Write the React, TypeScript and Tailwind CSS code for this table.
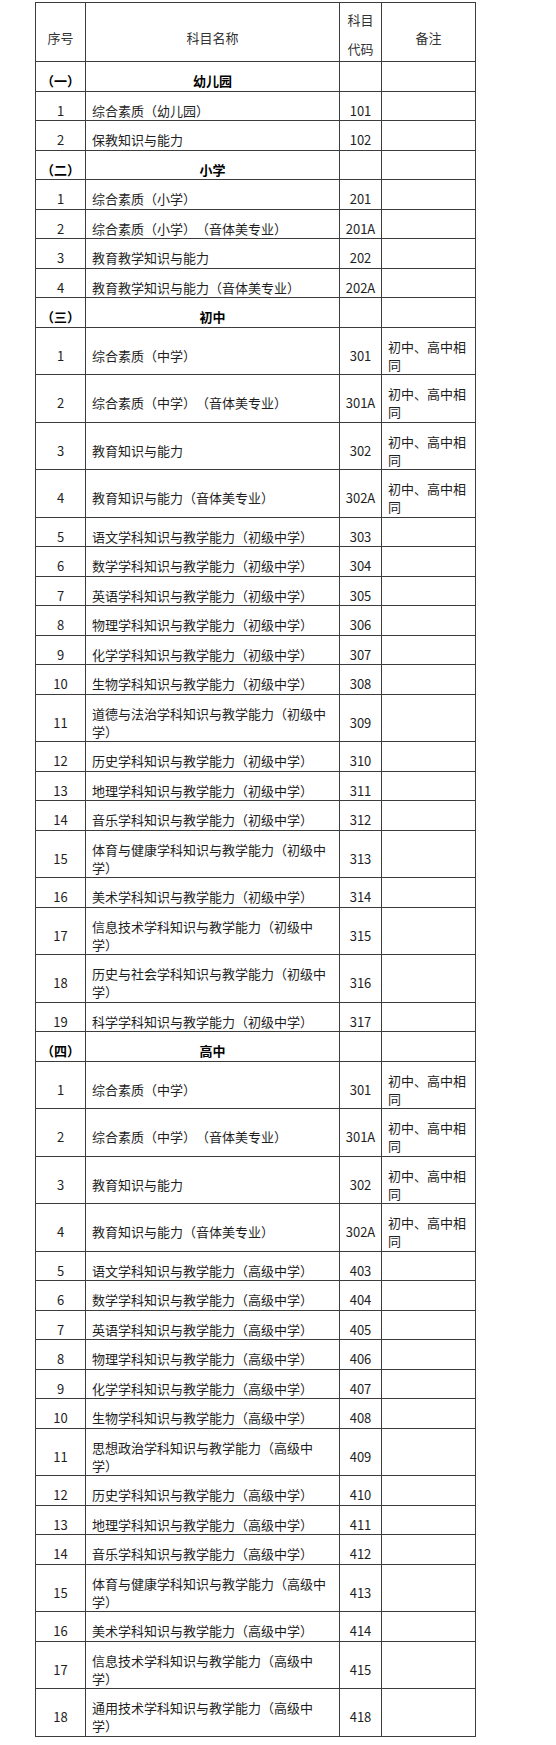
const SAME = '初中、高中相同';

type Row = [string, string, string, string?];

const sections: { label: string; title: string; rows: Row[] }[] = [
  {
    label: '（一）',
    title: '幼儿园',
    rows: [
      ['1', '综合素质（幼儿园）', '101'],
      ['2', '保教知识与能力', '102'],
    ],
  },
  {
    label: '（二）',
    title: '小学',
    rows: [
      ['1', '综合素质（小学）', '201'],
      ['2', '综合素质（小学）（音体美专业）', '201A'],
      ['3', '教育教学知识与能力', '202'],
      ['4', '教育教学知识与能力（音体美专业）', '202A'],
    ],
  },
  {
    label: '（三）',
    title: '初中',
    rows: [
      ['1', '综合素质（中学）', '301', SAME],
      ['2', '综合素质（中学）（音体美专业）', '301A', SAME],
      ['3', '教育知识与能力', '302', SAME],
      ['4', '教育知识与能力（音体美专业）', '302A', SAME],
      ['5', '语文学科知识与教学能力（初级中学）', '303'],
      ['6', '数学学科知识与教学能力（初级中学）', '304'],
      ['7', '英语学科知识与教学能力（初级中学）', '305'],
      ['8', '物理学科知识与教学能力（初级中学）', '306'],
      ['9', '化学学科知识与教学能力（初级中学）', '307'],
      ['10', '生物学科知识与教学能力（初级中学）', '308'],
      ['11', '道德与法治学科知识与教学能力（初级中学）', '309'],
      ['12', '历史学科知识与教学能力（初级中学）', '310'],
      ['13', '地理学科知识与教学能力（初级中学）', '311'],
      ['14', '音乐学科知识与教学能力（初级中学）', '312'],
      ['15', '体育与健康学科知识与教学能力（初级中学）', '313'],
      ['16', '美术学科知识与教学能力（初级中学）', '314'],
      ['17', '信息技术学科知识与教学能力（初级中学）', '315'],
      ['18', '历史与社会学科知识与教学能力（初级中学）', '316'],
      ['19', '科学学科知识与教学能力（初级中学）', '317'],
    ],
  },
  {
    label: '（四）',
    title: '高中',
    rows: [
      ['1', '综合素质（中学）', '301', SAME],
      ['2', '综合素质（中学）（音体美专业）', '301A', SAME],
      ['3', '教育知识与能力', '302', SAME],
      ['4', '教育知识与能力（音体美专业）', '302A', SAME],
      ['5', '语文学科知识与教学能力（高级中学）', '403'],
      ['6', '数学学科知识与教学能力（高级中学）', '404'],
      ['7', '英语学科知识与教学能力（高级中学）', '405'],
      ['8', '物理学科知识与教学能力（高级中学）', '406'],
      ['9', '化学学科知识与教学能力（高级中学）', '407'],
      ['10', '生物学科知识与教学能力（高级中学）', '408'],
      ['11', '思想政治学科知识与教学能力（高级中学）', '409'],
      ['12', '历史学科知识与教学能力（高级中学）', '410'],
      ['13', '地理学科知识与教学能力（高级中学）', '411'],
      ['14', '音乐学科知识与教学能力（高级中学）', '412'],
      ['15', '体育与健康学科知识与教学能力（高级中学）', '413'],
      ['16', '美术学科知识与教学能力（高级中学）', '414'],
      ['17', '信息技术学科知识与教学能力（高级中学）', '415'],
      ['18', '通用技术学科知识与教学能力（高级中学）', '418'],
    ],
  },
];

const cell = 'border border-[#3c3c3c] pt-[10px] pb-[0.5px] align-middle';

export default function App() {
  return (
    <div className="min-h-screen bg-white pt-[2px] pl-[35px] font-['Noto_Sans_CJK_SC','Noto_Sans',sans-serif] text-[13px] leading-[18px] text-[#1e1e1e] [text-spacing-trim:space-all]">
      <table className="w-[440px] table-fixed border-collapse">
        <colgroup>
          <col className="w-[50px]" />
          <col className="w-[254px]" />
          <col className="w-[42px]" />
          <col className="w-[94px]" />
        </colgroup>
        <thead>
          <tr className="h-[59px] text-[#333]">
            <th className="border border-[#3c3c3c] pt-[11px] font-normal">序号</th>
            <th className="border border-[#3c3c3c] pt-[11px] font-normal">科目名称</th>
            <th className="border border-[#3c3c3c] pt-[4px] font-normal">
              <div className="leading-[16px]">科目</div>
              <div className="mt-[13px] leading-[16px]">代码</div>
            </th>
            <th className="border border-[#3c3c3c] pt-[11px] font-normal">备注</th>
          </tr>
        </thead>
        <tbody>
          {sections.map((s) => (
            <>
              <tr key={s.label} className="font-bold text-black">
                <td className={`${cell} text-center [font-feature-settings:'halt']`}>{s.label}</td>
                <td className={`${cell} text-center`}>{s.title}</td>
                <td className={cell}></td>
                <td className={cell}></td>
              </tr>
              {s.rows.map(([no, name, code, note]) => (
                <tr key={s.label + no}>
                  <td className={`${cell} text-center`}>{no}</td>
                  <td className={`${cell} pl-[6px] pr-[10px]`}>{name}</td>
                  <td className={`${cell} text-center`}>{code}</td>
                  <td className={`${cell} pl-[6px] pr-[4px]`}>{note ?? ''}</td>
                </tr>
              ))}
            </>
          ))}
        </tbody>
      </table>
    </div>
  );
}
